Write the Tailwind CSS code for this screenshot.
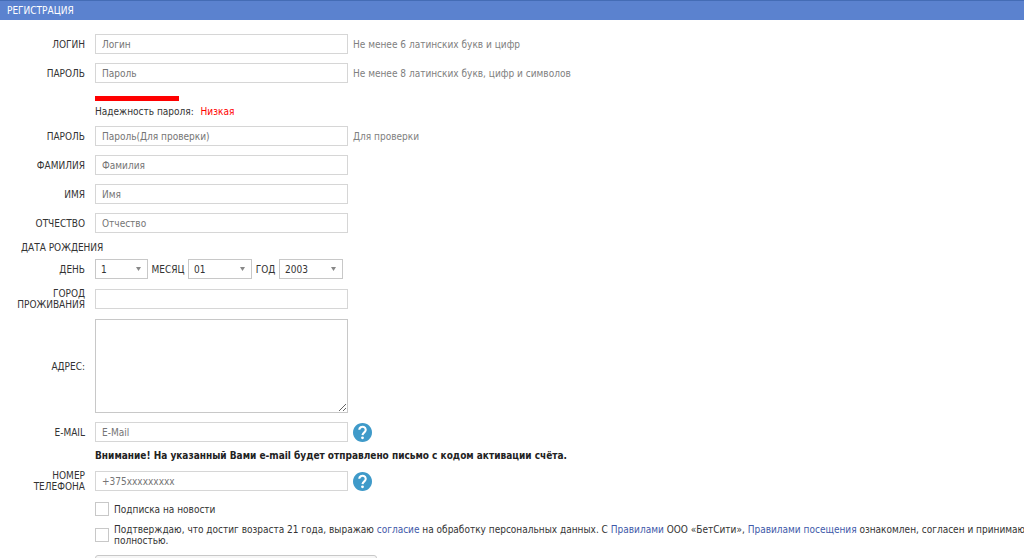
<!DOCTYPE html>
<html lang="ru">
<head>
<meta charset="utf-8">
<meta name="viewport" content="width=device-width, initial-scale=1">
<title>Регистрация</title>
<script src="https://cdn.jsdelivr.net/npm/@tailwindcss/browser@4"></script>
</head>
<body class="overflow-x-hidden bg-white font-['DejaVu_Sans_Condensed','Noto_Sans',sans-serif] text-[10px] leading-[11px] text-[#333]">
<header class="flex h-5 items-center border-t border-[#446cb5] bg-[#5b82cf] pl-[7px] text-white">
  <h1>РЕГИСТРАЦИЯ</h1>
</header>
<form class="flex flex-col pt-[14px]">
  <div class="flex flex-col gap-[9px]">
    <div class="flex items-center">
      <label for="login" class="mr-[10px] w-[85px] shrink-0 text-right">ЛОГИН</label>
      <input id="login" type="text" placeholder="Логин" class="h-5 w-[253px] border border-[#d6d6d6] px-1.5 placeholder:text-[#757575]">
      <span class="ml-[5px] text-[#808080]">Не менее 6 латинских букв и цифр</span>
    </div>
    <div class="flex items-center">
      <label for="pass" class="mr-[10px] w-[85px] shrink-0 text-right">ПАРОЛЬ</label>
      <input id="pass" type="password" placeholder="Пароль" class="h-5 w-[253px] border border-[#d6d6d6] px-1.5 placeholder:text-[#757575]">
      <span class="ml-[5px] text-[#808080]">Не менее 8 латинских букв, цифр и символов</span>
    </div>
  </div>
  <div class="mt-[13px] ml-[95px] flex flex-col gap-[5px]">
    <div class="h-[5px] w-[84px] bg-[#f00]"></div>
    <p>Надежность пароля: <span class="ml-1 text-[#f00]">Низкая</span></p>
  </div>
  <div class="mt-[9px] flex flex-col gap-[9px]">
    <div class="flex items-center">
      <label for="pass2" class="mr-[10px] w-[85px] shrink-0 text-right">ПАРОЛЬ</label>
      <input id="pass2" type="password" placeholder="Пароль(Для проверки)" class="h-5 w-[253px] border border-[#d6d6d6] px-1.5 placeholder:text-[#757575]">
      <span class="ml-[5px] text-[#808080]">Для проверки</span>
    </div>
    <div class="flex items-center">
      <label for="surname" class="mr-[10px] w-[85px] shrink-0 text-right">ФАМИЛИЯ</label>
      <input id="surname" type="text" placeholder="Фамилия" class="h-5 w-[253px] border border-[#d6d6d6] px-1.5 placeholder:text-[#757575]">
    </div>
    <div class="flex items-center">
      <label for="name" class="mr-[10px] w-[85px] shrink-0 text-right">ИМЯ</label>
      <input id="name" type="text" placeholder="Имя" class="h-5 w-[253px] border border-[#d6d6d6] px-1.5 placeholder:text-[#757575]">
    </div>
    <div class="flex items-center">
      <label for="patronymic" class="mr-[10px] w-[85px] shrink-0 text-right">ОТЧЕСТВО</label>
      <input id="patronymic" type="text" placeholder="Отчество" class="h-5 w-[253px] border border-[#d6d6d6] px-1.5 placeholder:text-[#757575]">
    </div>
  </div>
  <fieldset class="mt-[9px]">
    <legend class="mb-[6px] ml-[21px]">ДАТА РОЖДЕНИЯ</legend>
    <div class="flex items-center">
      <label for="day" class="mr-[10px] w-[85px] shrink-0 text-right">ДЕНЬ</label>
      <div class="grid items-center">
        <select id="day" class="col-start-1 row-start-1 h-5 w-[53px] appearance-none border border-[#c8c8c8] px-[5px]"><option>1</option></select>
        <svg class="pointer-events-none col-start-1 row-start-1 mr-[7px] justify-self-end" width="5" height="4" viewBox="0 0 5 4"><path d="M0 0h5L2.500 4z" fill="#888"/></svg>
      </div>
      <label for="month" class="w-[40px] text-center">МЕСЯЦ</label>
      <div class="grid items-center">
        <select id="month" class="col-start-1 row-start-1 h-5 w-[64px] appearance-none border border-[#c8c8c8] px-[5px]"><option>01</option></select>
        <svg class="pointer-events-none col-start-1 row-start-1 mr-[7px] justify-self-end" width="5" height="4" viewBox="0 0 5 4"><path d="M0 0h5L2.500 4z" fill="#888"/></svg>
      </div>
      <label for="year" class="w-[27px] text-center">ГОД</label>
      <div class="grid items-center">
        <select id="year" class="col-start-1 row-start-1 h-5 w-[64px] appearance-none border border-[#c8c8c8] px-[5px]"><option>2003</option></select>
        <svg class="pointer-events-none col-start-1 row-start-1 mr-[7px] justify-self-end" width="5" height="4" viewBox="0 0 5 4"><path d="M0 0h5L2.500 4z" fill="#888"/></svg>
      </div>
    </div>
  </fieldset>
  <div class="mt-[9px] flex flex-col gap-[9px]">
    <div class="flex items-center">
      <label for="city" class="mr-[10px] w-[85px] shrink-0 text-right">ГОРОД ПРОЖИВАНИЯ</label>
      <input id="city" type="text" class="h-5 w-[253px] border border-[#d6d6d6] px-1.5">
    </div>
    <div class="flex items-center">
      <label for="address" class="mr-[10px] w-[85px] shrink-0 text-right">АДРЕС:</label>
      <textarea id="address" class="h-[94px] w-[253px] resize border border-[#c8c8c8] p-1.5"></textarea>
    </div>
    <div class="flex h-5 items-center">
      <label for="email" class="mr-[10px] w-[85px] shrink-0 text-right">E-MAIL</label>
      <input id="email" type="email" placeholder="E-Mail" class="h-5 w-[253px] border border-[#d6d6d6] px-1.5 placeholder:text-[#757575]">
      <button type="button" aria-label="Помощь: e-mail" class="ml-[5px]"><svg width="19" height="19" viewBox="2 2 20 20"><path fill="#3f9ac9" d="M12 2C6.480 2 2 6.480 2 12s4.480 10 10 10 10-4.480 10-10S17.520 2 12 2z"/><path d="M8.600 9.200a3.400 3.200 0 1 1 5.600 2.400c-1.200 1-2 1.500-2.200 3.200" fill="none" stroke="#fff" stroke-width="2.200"/><circle cx="12" cy="17.600" r="1.500" fill="#fff"/></svg></button>
    </div>
  </div>
  <p class="mt-2 ml-[95px] font-bold text-[#222]">Внимание! На указанный Вами e-mail будет отправлено письмо с кодом активации счёта.</p>
  <div class="mt-[9px] flex items-center">
    <label for="phone" class="mr-[10px] w-[85px] shrink-0 text-right">НОМЕР ТЕЛЕФОНА</label>
    <input id="phone" type="tel" placeholder="+375xxxxxxxxx" class="h-5 w-[253px] border border-[#d6d6d6] px-1.5 placeholder:text-[#757575]">
    <button type="button" aria-label="Помощь: телефон" class="ml-[5px]"><svg width="19" height="19" viewBox="2 2 20 20"><path fill="#3f9ac9" d="M12 2C6.480 2 2 6.480 2 12s4.480 10 10 10 10-4.480 10-10S17.520 2 12 2z"/><path d="M8.600 9.200a3.400 3.200 0 1 1 5.600 2.400c-1.200 1-2 1.500-2.200 3.200" fill="none" stroke="#fff" stroke-width="2.200"/><circle cx="12" cy="17.600" r="1.500" fill="#fff"/></svg></button>
  </div>
  <div class="mt-[10px] ml-[95px] flex items-center gap-[5px]">
    <input id="news" type="checkbox" class="size-[14px] shrink-0 appearance-none border border-[#c8c8c8] checked:bg-[#5b82cf]">
    <label for="news">Подписка на новости</label>
  </div>
  <div class="mt-2 -mr-2 ml-[95px] flex items-center gap-[5px]">
    <input id="agree" type="checkbox" class="size-[14px] shrink-0 appearance-none border border-[#c8c8c8] checked:bg-[#5b82cf]">
    <label for="agree">Подтверждаю, что достиг возраста 21 года, выражаю <a href="#" class="text-[#4059a9]">согласие</a> на обработку персональных данных. С <a href="#" class="text-[#4059a9]">Правилами</a> ООО «БетСити», <a href="#" class="text-[#4059a9]">Правилами посещения</a> ознакомлен, согласен и принимаю полностью.</label>
  </div>
  <button type="submit" aria-label="Зарегистрироваться" class="mt-[9px] ml-[95px] h-7 w-[282px] rounded-[3px] border border-[#c8c8c8] bg-[#f6f6f6]"></button>
</form>
</body>
</html>
